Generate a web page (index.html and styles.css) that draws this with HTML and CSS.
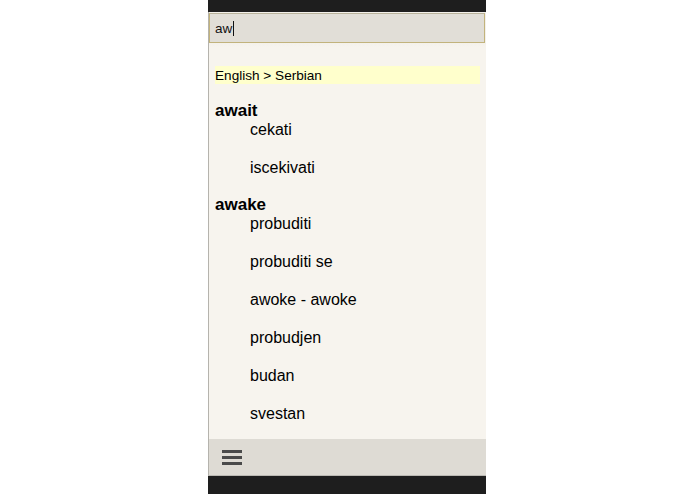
FILE: index.html
```html
<!DOCTYPE html>
<html>
<head>
<meta charset="utf-8">
<link rel="stylesheet" href="styles.css">
</head>
<body>
<div class="phone">
  <div class="statusbar"></div>
  <div class="searchwrap">
    <div class="search"><span class="query">aw</span><span class="caret"></span></div>
  </div>
  <div class="content">
    <div class="lang">English &gt; Serbian</div>
    <div class="entry">
      <div class="head">await</div>
      <div class="tr">cekati</div>
      <div class="tr">iscekivati</div>
    </div>
    <div class="entry">
      <div class="head">awake</div>
      <div class="tr">probuditi</div>
      <div class="tr">probuditi se</div>
      <div class="tr">awoke - awoke</div>
      <div class="tr">probudjen</div>
      <div class="tr">budan</div>
      <div class="tr">svestan</div>
    </div>
  </div>
  <div class="toolbar">
    <svg class="menu" width="20" height="15" viewBox="0 0 20 15">
      <rect x="0" y="0" width="20" height="3" fill="#4a4a4a"/>
      <rect x="0" y="6" width="20" height="3" fill="#4a4a4a"/>
      <rect x="0" y="12" width="20" height="3" fill="#4a4a4a"/>
    </svg>
  </div>
  <div class="bottombar"></div>
</div>
</body>
</html>
```
FILE: styles.css
```css
html, body {
  margin: 0;
  padding: 0;
  background: #ffffff;
  height: 494px;
  overflow: hidden;
}
.phone {
  margin-left: 208px;
  width: 278px;
  height: 494px;
  display: flex;
  flex-direction: column;
  font-family: "Liberation Sans", Arial, sans-serif;
  color: #000;
}
.statusbar {
  height: 12px;
  background: #1e1e1e;
  flex: none;
}
.searchwrap {
  flex: none;
  border-left: 1px solid #b5b3ad;
  padding: 1px 1px 5px 0;
  background: linear-gradient(#f3f0ea, #f3f0ea 80%, #f7f4ee);
}
.search {
  height: 28px;
  background: #e1ded7;
  border: 1px solid #c2b37c;
  border-top-color: #b9b39c;
  display: flex;
  align-items: center;
  padding-left: 5px;
  font-size: 13.5px;
  color: #111;
}
.caret {
  display: inline-block;
  width: 1px;
  height: 15px;
  background: #111;
  margin-left: 1px;
}
.content {
  flex: 1;
  background: #f7f4ee;
  border-left: 1px solid #b5b3ad;
  padding: 18px 6px 0 6px;
  overflow: hidden;
}
.lang {
  background: #ffffcc;
  height: 18px;
  line-height: 19px;
  font-size: 13.6px;
  margin-bottom: 17px;
}
.head {
  font-weight: bold;
  font-size: 17px;
  line-height: 19px;
}
.tr {
  font-size: 16px;
  line-height: 19px;
  padding-left: 35px;
  margin-bottom: 19px;
}
.entry + .entry {
  margin-top: -1px;
}
.toolbar {
  flex: none;
  height: 36px;
  background: #dedbd4;
  border-left: 1px solid #b5b3ad;
  border-bottom: 1px solid #bbb9b3;
  display: flex;
  align-items: center;
  padding-left: 13px;
}
.bottombar {
  flex: none;
  height: 18px;
  background: #1e1e1e;
}
```
